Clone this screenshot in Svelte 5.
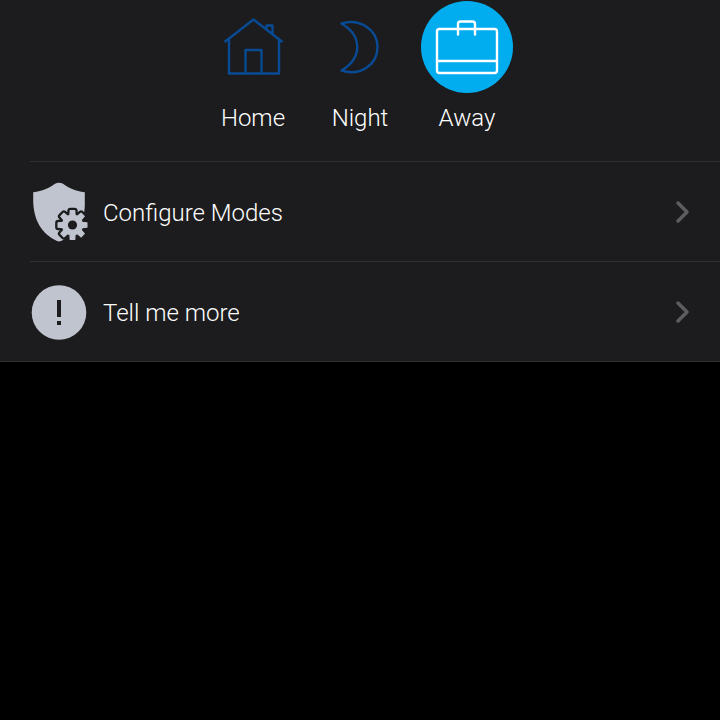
<script>
  const modes = [
    { id: 'home', label: 'Home' },
    { id: 'night', label: 'Night' },
    { id: 'away', label: 'Away' }
  ];
  let active = $state('away');

  // Outline of an eight-toothed gear centred on (cx, cy)
  function gear(cx, cy, outer, inner) {
    const points = [];
    for (let i = 0; i < 8; i++) {
      const mid = (i * Math.PI) / 4;
      for (const [offset, r] of [[-0.25, inner], [-0.15, outer], [0.15, outer], [0.25, inner]]) {
        points.push(`${(cx + r * Math.cos(mid + offset)).toFixed(2)} ${(cy + r * Math.sin(mid + offset)).toFixed(2)}`);
      }
    }
    return `M${points.join('L')}Z`;
  }
  const gearPath = gear(42.5, 45, 14.5, 10);
</script>

{#snippet chevron()}
  <svg class="chevron" viewBox="0 0 16 24" aria-hidden="true">
    <path d="M3 3 L12 12 L3 21" />
  </svg>
{/snippet}

<main>
  <section class="modes" aria-label="Modes">
    {#each modes as mode (mode.id)}
      <button
        type="button"
        class:active={active === mode.id}
        aria-pressed={active === mode.id}
        onclick={() => (active = mode.id)}
      >
        <span class="disc">
          <svg viewBox="0 0 92 92" aria-hidden="true">
            {#if mode.id === 'home'}
              <path d="M17.500 41 L46.500 18.500 L75.500 41 M22 38.500 V72.500 H72 V38.500 M38.500 72.500 V49 H54.500 V72.500 M59.500 28 V24.500 H65.500 V33" />
            {:else if mode.id === 'night'}
              <path d="M27.500 22.500 C46 17 63.500 29 63.500 46 C63.500 64 46 75.500 27.500 69.500 C48.500 57 48.500 35 27.500 22.500 Z" />
            {:else}
              <rect x="16" y="28" width="60" height="44" rx="2.500" />
              <path d="M16 60 H76 M37 33.500 V23 Q37 20.500 39.500 20.500 H51.500 Q54 20.500 54 23 V33.500" />
            {/if}
          </svg>
        </span>
        <span class="label">{mode.label}</span>
      </button>
    {/each}
  </section>

  <nav aria-label="Mode options">
    <a href="#configure">
      <svg class="icon" viewBox="0 0 60 64" aria-hidden="true">
        <path class="fill" d="M3.200 12.300 C13 11 18 8.500 25 3.800 Q29 1.600 33 3.800 C40 8.500 45 11 54.800 12.300 V25 C54.800 43 43 56 31 61 Q29 61.800 27 61 C12 54 3.200 40 3.200 20 Z" />
        <path class="cut" d={gearPath} />
        <path class="tooth" d={gearPath} />
        <circle class="dark" cx="42.500" cy="45" r="4.600" />
      </svg>
      <span class="text">Configure Modes</span>
      {@render chevron()}
    </a>
    <a href="#more">
      <svg class="icon" viewBox="0 0 60 64" aria-hidden="true">
        <circle class="fill" cx="29" cy="32.500" r="27.300" />
        <path class="dark" d="M27 20 H31 V37 H27 Z M27 41 H31 V45 H27 Z" />
      </svg>
      <span class="text">Tell me more</span>
      {@render chevron()}
    </a>
  </nav>
</main>

<style>
  :global(body) {
    margin: 0;
    background: #000;
  }

  main {
    background: #1c1c1e;
    border-bottom: 1px solid #303033;
    color: #fff;
    font-family: Roboto, 'Liberation Sans', sans-serif;
    font-size: 24px;
    font-weight: 300;
    line-height: 32px;
  }

  .modes {
    display: flex;
    justify-content: center;
    padding: 1px 0 27px;
  }

  button {
    display: flex;
    flex-direction: column;
    align-items: center;
    gap: 9px;
    width: 107px;
    padding: 0;
    border: 0;
    background: none;
    color: inherit;
    font: inherit;
    cursor: pointer;
  }

  .disc {
    display: flex;
    width: 92px;
    height: 92px;
    border-radius: 50%;
  }

  .disc svg {
    width: 100%;
    fill: none;
    stroke: #084b94;
    stroke-width: 2.4;
    stroke-linejoin: round;
  }

  .active .disc {
    background: #02adef;
  }

  .active .disc svg {
    stroke: #fff;
    stroke-linecap: round;
  }

  nav {
    display: flex;
    flex-direction: column;
    padding-left: 30px;
  }

  a {
    display: flex;
    align-items: center;
    height: 99px;
    padding-right: 29px;
    border-top: 1px solid #303033;
    color: inherit;
    text-decoration: none;
  }

  .icon {
    width: 60px;
    height: 64px;
    margin-right: 13px;
  }

  .fill,
  .tooth {
    fill: #c0c4ce;
  }

  .tooth {
    stroke: #c0c4ce;
    stroke-width: 1.4;
    stroke-linejoin: round;
  }

  .cut {
    fill: #1c1c1e;
    stroke: #1c1c1e;
    stroke-width: 6;
    stroke-linejoin: round;
  }

  .dark {
    fill: #1c1c1e;
  }

  .text {
    flex: 1;
    padding-top: 2px;
  }

  .chevron {
    width: 16px;
    height: 24px;
    fill: none;
    stroke: #5d5d61;
    stroke-width: 3.5;
    stroke-linecap: round;
    stroke-linejoin: round;
  }
</style>
